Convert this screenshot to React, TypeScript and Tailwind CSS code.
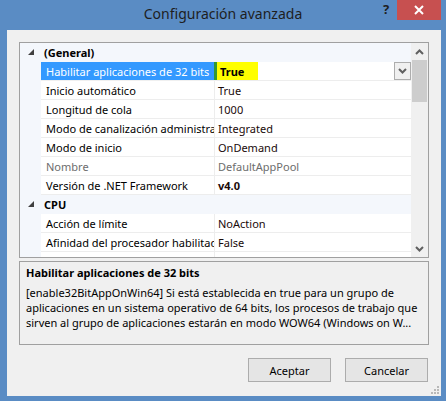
import React from 'react';

type Row =
    | { kind: 'cat'; label: string }
    | { kind: 'prop'; name: string; value: string; dim?: boolean; bold?: boolean; selected?: boolean };

const rows: Row[] = [
    { kind: 'cat', label: '(General)' },
    { kind: 'prop', name: 'Habilitar aplicaciones de 32 bits', value: 'True', selected: true },
    { kind: 'prop', name: 'Inicio automático', value: 'True' },
    { kind: 'prop', name: 'Longitud de cola', value: '1000' },
    { kind: 'prop', name: 'Modo de canalización administrada', value: 'Integrated' },
    { kind: 'prop', name: 'Modo de inicio', value: 'OnDemand' },
    { kind: 'prop', name: 'Nombre', value: 'DefaultAppPool', dim: true },
    { kind: 'prop', name: 'Versión de .NET Framework', value: 'v4.0', bold: true },
    { kind: 'cat', label: 'CPU' },
    { kind: 'prop', name: 'Acción de límite', value: 'NoAction' },
    { kind: 'prop', name: 'Afinidad del procesador habilitada', value: 'False' },
    { kind: 'prop', name: '', value: '' },
];

const Chevron = ({ up }: { up?: boolean }) => (
    <svg width="9" height="6" viewBox="0 0 9 6" className="block">
        <path
            d={up ? 'M1 5 L4.5 1.5 L8 5' : 'M1 1 L4.5 4.5 L8 1'}
            fill="none"
            stroke="#606060"
            strokeWidth="2"
        />
    </svg>
);

const Triangle = () => (
    <svg width="6" height="6" viewBox="0 0 6 6" className="block">
        <path d="M6 0 L6 6 L0 6 Z" fill="#404040" />
    </svg>
);

const GridRow: React.FC<{ row: Row }> = ({ row }) => {
    if (row.kind === 'cat') {
        return (
            <div className="flex h-[19px] items-center bg-[#f4f7fc] border-b border-[#f4f7fc]">
                <div className="w-[21px] flex justify-center pl-[1px]">
                    <Triangle />
                </div>
                <span className="pl-[3px] font-bold text-black">{row.label}</span>
            </div>
        );
    }
    return (
        <div className="flex h-[19px]">
            <div className="w-[21px] bg-[#f4f7fc]" />
            <div
                className={
                    row.selected
                        ? 'w-[173px] flex items-center pl-[5px] overflow-hidden whitespace-nowrap bg-[#3399ff] text-white border-b border-[#f0f0f0]'
                        : 'w-[173px] flex items-center pl-[5px] overflow-hidden whitespace-nowrap border-b border-[#ededed] ' +
                          (row.dim ? 'text-[#6d6d6d]' : 'text-black')
                }
            >
                {row.name}
            </div>
            {row.selected ? <div className="w-[3px] bg-[#339933] border-b border-[#f0f0f0]" /> : <div className="w-[1px] bg-[#ededed]" />}
            <div className="flex-1 flex items-center border-b border-[#ededed] overflow-hidden whitespace-nowrap">
                {row.selected ? (
                    <>
                        <span className="h-[18px] w-[41px] bg-[#ffff00] flex items-center pl-[3px] font-bold text-black">
                            {row.value}
                        </span>
                        <div className="flex-1" />
                        <div className="w-[17px] h-[18px] border border-[#adadad] bg-[#f0f0f0] flex items-center justify-center">
                            <Chevron />
                        </div>
                    </>
                ) : (
                    <span
                        className={
                            'pl-[3px] ' +
                            (row.dim ? 'text-[#6d6d6d]' : 'text-[#1a0a0a]') +
                            (row.bold ? ' font-bold' : '')
                        }
                    >
                        {row.value}
                    </span>
                )}
            </div>
        </div>
    );
};

export default function App() {
    return (
        <div className="w-[446px] h-[401px] bg-[#5a8cc4] flex flex-col font-['Segoe_UI','Noto_Sans',sans-serif] text-[11px] leading-none select-none overflow-hidden">
            {/* Title bar */}
            <div className="h-[30px] flex items-start">
                <div className="w-[71px]" />
                <div className="flex-1 text-center text-[14px] text-[#1e1e1e] pt-[7px]">
                    Configuración avanzada
                </div>
                <div className="w-[71px] flex items-start">
                    <div className="w-[22px] flex justify-center pt-[3px] text-[13px] font-bold text-[#1e1e1e]">?</div>
                    <div className="w-[44px] h-[20px] bg-[#c75050] flex items-center justify-center">
                        <svg width="10" height="10" viewBox="0 0 10 10">
                            <path d="M1 1 L9 9 M9 1 L1 9" stroke="white" strokeWidth="2" />
                        </svg>
                    </div>
                </div>
            </div>

            {/* Client area */}
            <div className="relative ml-[7px] w-[434px] h-[366px] bg-[#f0f0f0] p-[12px] flex flex-col">
                {/* Property grid */}
                <div className="h-[216px] border border-[#a0a0a0] bg-white flex">
                    <div className="flex-1 overflow-hidden">
                        {rows.map((r, i) => (
                            <GridRow key={i} row={r} />
                        ))}
                    </div>
                    <div className="w-[17px] bg-[#f0f0f0] flex flex-col">
                        <div className="h-[17px] flex items-center justify-center">
                            <Chevron up />
                        </div>
                        <div className="h-[42px] mx-[1px] bg-[#cdcdcd]" />
                        <div className="flex-1" />
                        <div className="h-[17px] flex items-center justify-center">
                            <Chevron />
                        </div>
                    </div>
                </div>

                {/* Description */}
                <div className="mt-[3px] h-[84px] border border-[#a0a0a0] bg-[#f0f0f0] pl-[6px] pt-[3px] whitespace-nowrap overflow-hidden text-black">
                    <div className="font-bold leading-[16px]">Habilitar aplicaciones de 32 bits</div>
                    <div className="mt-[4px] leading-[15px]">
                        <div>[enable32BitAppOnWin64] Si está establecida en true para un grupo de</div>
                        <div>aplicaciones en un sistema operativo de 64 bits, los procesos de trabajo que</div>
                        <div>sirven al grupo de aplicaciones estarán en modo WOW64 (Windows on W...</div>
                    </div>
                </div>

                {/* Buttons */}
                <div className="mt-[13px] flex justify-end gap-[14px] pr-[1px]">
                    <button className="w-[83px] h-[24px] border border-[#acacac] bg-[#e5e5e5] text-black text-[11px]">
                        Aceptar
                    </button>
                    <button className="w-[83px] h-[24px] border border-[#acacac] bg-[#e5e5e5] text-black text-[11px]">
                        Cancelar
                    </button>
                </div>

                {/* Size grip */}
                <svg width="8" height="8" viewBox="0 0 8 8" className="absolute right-[2px] bottom-[2px]">
                    <rect x="6" y="0" width="2" height="2" fill="#b8b8b8" />
                    <rect x="3" y="3" width="2" height="2" fill="#b8b8b8" />
                    <rect x="6" y="3" width="2" height="2" fill="#b8b8b8" />
                    <rect x="0" y="6" width="2" height="2" fill="#b8b8b8" />
                    <rect x="3" y="6" width="2" height="2" fill="#b8b8b8" />
                    <rect x="6" y="6" width="2" height="2" fill="#b8b8b8" />
                </svg>
            </div>
        </div>
    );
}
